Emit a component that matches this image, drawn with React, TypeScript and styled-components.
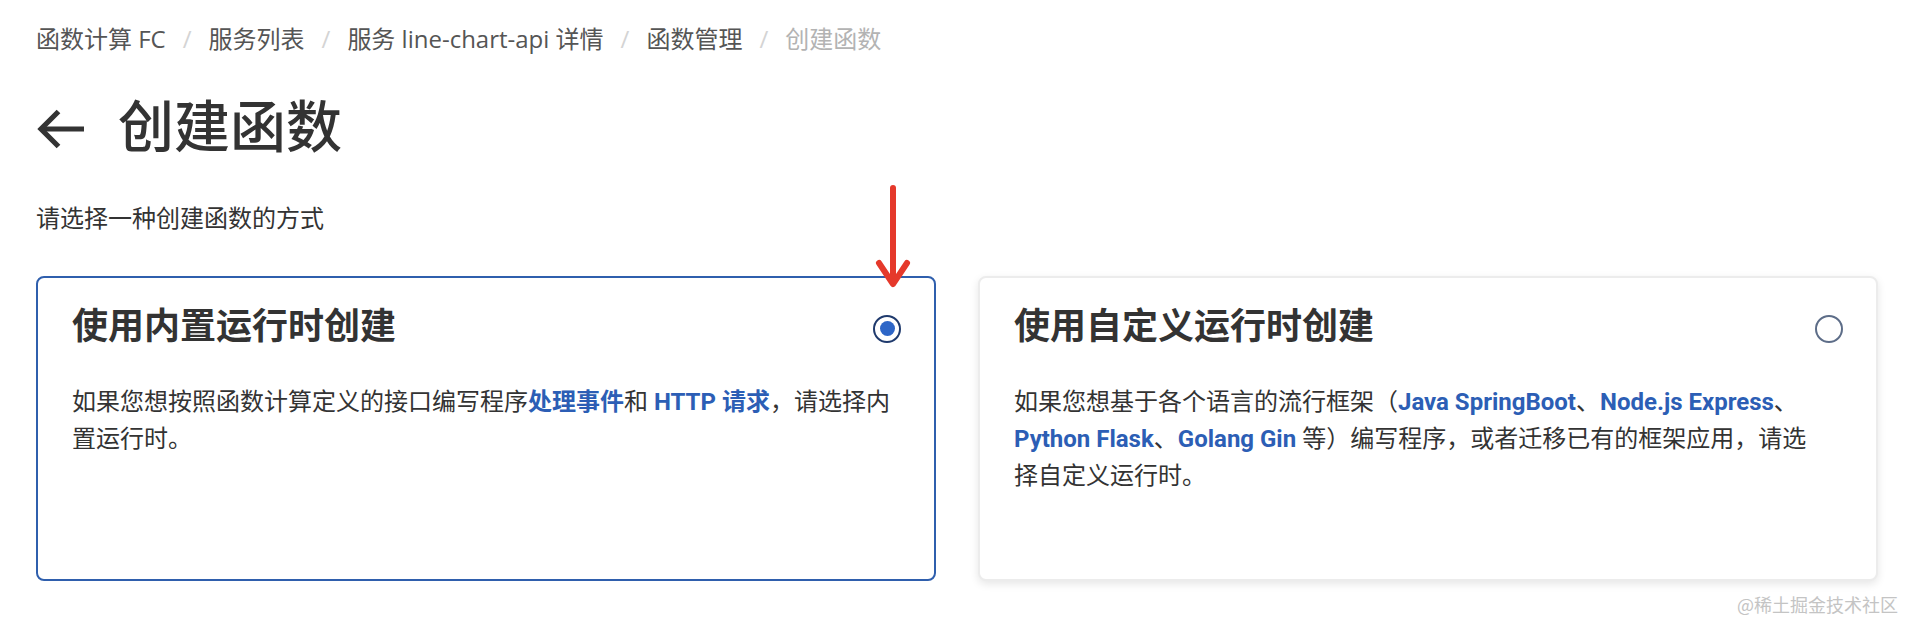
import React, { useState } from 'react';
import styled, { createGlobalStyle } from 'styled-components';

const GlobalStyle = createGlobalStyle`
    html, body {
        margin: 0;
        padding: 0;
        background: #ffffff;
    }
    body {
        font-family: Roboto, "Noto Sans CJK SC", sans-serif;
        color: #333333;
    }
`;

const Page = styled.div`
    position: relative;
    box-sizing: border-box;
    height: 624px;
    padding: 23px 28px 0 36px;
    overflow: hidden;
`;

const Breadcrumb = styled.nav`
    display: flex;
    align-items: center;
    font-family: "Open Sans", "Noto Sans CJK SC", sans-serif;
    font-size: 24px;
    line-height: 32px;
    color: #555555;
`;

const Crumb = styled.span<{ current?: boolean }>`
    color: ${(props) => (props.current ? '#b3b3b3' : '#555555')};
    white-space: nowrap;
`;

const Sep = styled.span`
    color: #d4d4d4;
    padding: 0 17px;
`;

const Header = styled.div`
    display: flex;
    align-items: center;
    margin-top: 40px;
    height: 67px;
`;

const BackButton = styled.button`
    display: flex;
    align-items: center;
    padding: 0;
    margin: 0 33px 0 1px;
    border: none;
    background: none;
    cursor: pointer;
`;

const Title = styled.h1`
    margin: 0;
    font-size: 56px;
    line-height: 67px;
    font-weight: 500;
    color: #333333;
`;

const Subtitle = styled.p`
    margin: 41px 0 0;
    font-size: 24px;
    line-height: 32px;
    color: #333333;
`;

const CardRow = styled.div`
    display: flex;
    gap: 42px;
    margin-top: 41px;
`;

const Card = styled.div<{ selected: boolean }>`
    box-sizing: border-box;
    width: 900px;
    height: 305px;
    padding: 25px 33px 0 34px;
    border-radius: 8px;
    border: 2px solid ${(props) => (props.selected ? '#2f5fad' : '#ececec')};
    box-shadow: ${(props) => (props.selected ? 'none' : '0 3px 8px rgba(0, 0, 0, 0.10)')};
    background: #ffffff;
    cursor: pointer;
`;

const CardHead = styled.div`
    display: flex;
    align-items: center;
    justify-content: space-between;
`;

const CardTitle = styled.h2`
    margin: 0;
    font-size: 36px;
    line-height: 48px;
    font-weight: 600;
    color: #333333;
`;

const Radio = styled.span<{ checked: boolean }>`
    box-sizing: border-box;
    display: flex;
    align-items: center;
    justify-content: center;
    width: 28px;
    height: 28px;
    margin-top: 3px;
    border-radius: 50%;
    border: 2px solid ${(props) => (props.checked ? '#1f3a6d' : '#5d6d88')};

    &::after {
        content: '';
        display: ${(props) => (props.checked ? 'block' : 'none')};
        width: 15px;
        height: 15px;
        border-radius: 50%;
        background: #2e66c7;
    }
`;

const Desc = styled.p`
    margin: 33px 0 0;
    font-size: 24px;
    line-height: 37px;
    color: #333333;
`;

const Link = styled.span`
    color: #2c5eb5;
    font-weight: 700;
`;

const Pointer = styled.svg`
    position: absolute;
    left: 872px;
    top: 180px;
`;

const Watermark = styled.div`
    position: absolute;
    right: 8px;
    bottom: 8px;
    font-size: 18px;
    line-height: 24px;
    color: #c4c4c4;
    font-family: "Noto Sans CJK SC", sans-serif;
`;

const crumbs = ['函数计算 FC', '服务列表', '服务 line-chart-api 详情', '函数管理'];

const App: React.FC = () => {
    const [mode, setMode] = useState<'builtin' | 'custom'>('builtin');

    return (
        <>
            <GlobalStyle />
            <Page>
                <Breadcrumb>
                    {crumbs.map((c) => (
                        <React.Fragment key={c}>
                            <Crumb>{c}</Crumb>
                            <Sep>/</Sep>
                        </React.Fragment>
                    ))}
                    <Crumb current>创建函数</Crumb>
                </Breadcrumb>

                <Header>
                    <BackButton aria-label="返回">
                        <svg width="48" height="40" viewBox="0 0 48 40" fill="none">
                            <path d="M47 20H5" stroke="#333" strokeWidth="5.2" />
                            <path d="M21.5 2.5L4 20L21.5 37.5" stroke="#333" strokeWidth="5.2" strokeLinejoin="miter" />
                        </svg>
                    </BackButton>
                    <Title>创建函数</Title>
                </Header>

                <Subtitle>请选择一种创建函数的方式</Subtitle>

                <CardRow>
                    <Card selected={mode === 'builtin'} onClick={() => setMode('builtin')}>
                        <CardHead>
                            <CardTitle>使用内置运行时创建</CardTitle>
                            <Radio checked={mode === 'builtin'} />
                        </CardHead>
                        <Desc>
                            如果您想按照函数计算定义的接口编写程序<Link>处理事件</Link>和 <Link>HTTP 请求</Link>，请选择内置运行时。
                        </Desc>
                    </Card>
                    <Card selected={mode === 'custom'} onClick={() => setMode('custom')}>
                        <CardHead>
                            <CardTitle>使用自定义运行时创建</CardTitle>
                            <Radio checked={mode === 'custom'} />
                        </CardHead>
                        <Desc>
                            如果您想基于各个语言的流行框架（<Link>Java SpringBoot</Link>、<Link>Node.js Express</Link>、
                            <Link>Python Flask</Link>、<Link>Golang Gin</Link> 等）编写程序，或者迁移已有的框架应用，请选
                            <br />
                            择自定义运行时。
                        </Desc>
                    </Card>
                </CardRow>

                <Pointer width="46" height="112" viewBox="0 0 46 112" fill="none">
                    <path d="M21 8V102" stroke="#e5392b" strokeWidth="6" strokeLinecap="round" />
                    <path d="M7 83L21 104L35 83" stroke="#e5392b" strokeWidth="6" strokeLinecap="round" strokeLinejoin="round" />
                </Pointer>

                <Watermark>@稀土掘金技术社区</Watermark>
            </Page>
        </>
    );
};

export default App;
